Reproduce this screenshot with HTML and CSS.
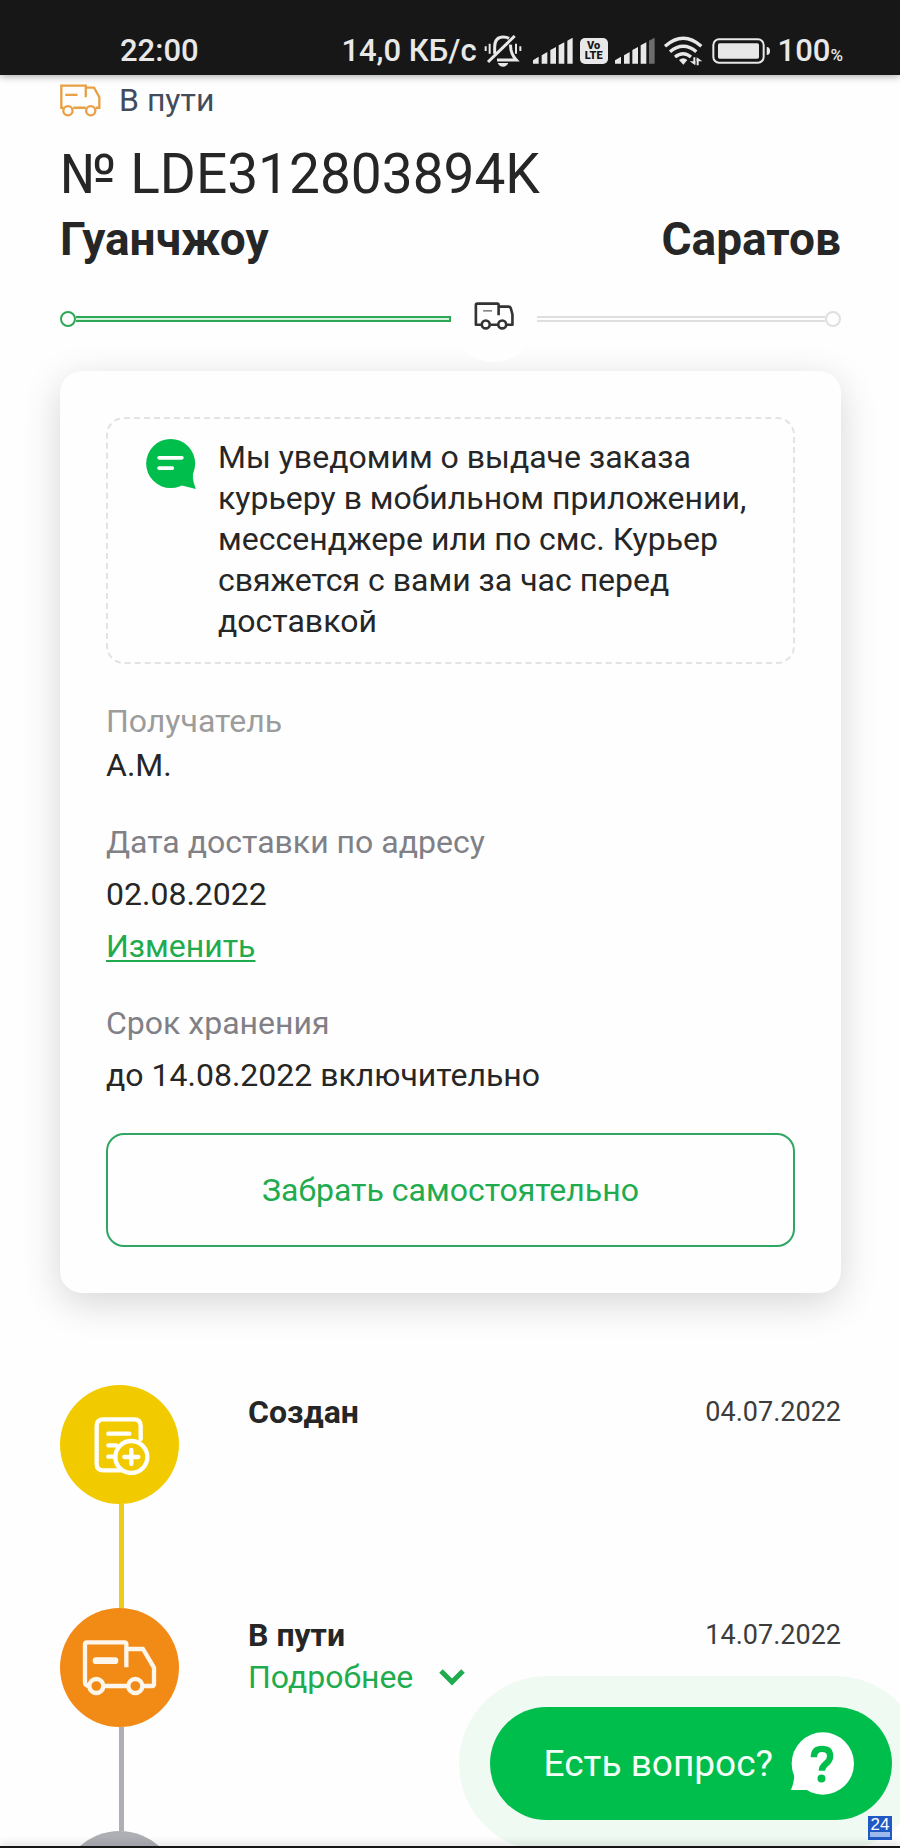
FILE: index.html
```html
<!DOCTYPE html>
<html lang="ru">
<head>
<meta charset="utf-8">
<meta name="viewport" content="width=device-width, initial-scale=1">
<title>Отслеживание заказа</title>
<link rel="stylesheet" href="styles.css">
</head>
<body>
<div class="screen">
  <header class="statusbar">
    <span class="clock">22:00</span>
    <div class="indicators">
      <span>14,0 КБ/с</span>
      <svg width="42" height="32" viewBox="478 104 126 96" fill="none" stroke="#e8e8e8" stroke-width="9" aria-hidden="true">
        <path d="M510 160V140Q510 110 536 110Q546 110 553 114M490 185L570 107M558 133Q556 158 575 179H517"/>
        <path d="M519 188H551Q546 199 535 199Q524 199 519 188Z" fill="#e8e8e8" stroke="none"/>
        <path d="M483 138V152M495 130V160M574 130V160M587 138V152" stroke-width="6"/>
      </svg>
      <svg width="40" height="26" viewBox="626 113 120 78" fill="#e8e8e8" aria-hidden="true">
        <path d="M626 190V180L643 169V190ZM652 190V165L669 155V190ZM678 190V149L695 140V190ZM703 190V135L720 126V190ZM729 190V121L745 112V190Z"/>
      </svg>
      <span class="volte"><span>Vo</span><span>LTE</span></span>
      <svg width="40" height="26" viewBox="36 113 120 78" fill="#e8e8e8" aria-hidden="true">
        <path d="M36 190V180L54 169V190ZM63 190V165L80 155V190ZM88 190V149L105 140V190ZM113 190V135L130 126V190Z"/>
        <path d="M138 190V121L155 112V190Z" fill="#6c6c6c"/>
      </svg>
      <svg width="42" height="30" viewBox="181 107 126 90" fill="none" stroke="#e8e8e8" stroke-width="10" aria-hidden="true">
        <path d="M190 138Q245 90 299 138M205 154Q245 121 284 154M220 170Q245 150 268 170"/>
        <path d="M232 179Q245 169 257 179L245 193Z" fill="#e8e8e8" stroke="none"/>
        <path d="M278 171V190M288 175V195" stroke-width="6"/>
        <path d="M264 183H281V195ZM302 183H285V171Z" fill="#e8e8e8" stroke="none"/>
      </svg>
      <svg width="60" height="26" viewBox="336 111 180 78" fill="none" stroke="#e8e8e8" stroke-width="6" aria-hidden="true">
        <rect x="343" y="115" width="151" height="70" rx="17"/>
        <rect x="357" y="127" width="123" height="46" rx="5" fill="#e8e8e8" stroke="none"/>
        <path d="M503 138Q513 138 513 150Q513 162 503 162Z" fill="#e8e8e8" stroke="none"/>
      </svg>
      <span>100<small class="percent">%</small></span>
    </div>
  </header>

  <main class="page">
    <p class="state">
      <svg width="41" height="33" viewBox="180 254 124 98" fill="none" stroke="#e9a044" stroke-width="7" aria-hidden="true">
        <path d="M190 325H184V258H258V293M258 264H283L299 293V325H288M220 325H258M196 286H233"/>
        <circle cx="204" cy="334" r="14"/><circle cx="273" cy="334" r="14"/>
      </svg>
      В пути
    </p>
    <h1 class="number">№ LDE312803894K</h1>
    <div class="cities"><span>Гуанчжоу</span><span>Саратов</span></div>

    <div class="track">
      <div class="leg leg-done"><span class="dot"></span><span class="rail"></span></div>
      <div class="marker">
        <svg width="40" height="28" viewBox="69 305 120 85" fill="none" stroke="#333" stroke-width="8" stroke-linejoin="round" aria-hidden="true">
          <path d="M90 374H74V314Q74 310 78 310H139Q143 310 143 314V345M145 319H173Q178 319 180 324L185 343V374H168M118 374H140"/>
          <circle cx="104" cy="373" r="12"/><circle cx="154" cy="373" r="12"/>
          <path d="M96 332H123" stroke-width="3"/>
        </svg>
      </div>
      <div class="leg leg-left"><span class="rail"></span><span class="dot"></span></div>
    </div>

    <section class="card">
      <div class="notice">
        <svg class="notice-icon" width="50" height="50" viewBox="438 477 150 151" aria-hidden="true">
          <circle cx="512" cy="551" r="74" fill="#00be4c"/>
          <path d="M582 570Q573 590 588 628L540 616Z" fill="#00be4c"/>
          <path d="M477 534H546M477 565H517" stroke="#fff" stroke-width="11" stroke-linecap="round"/>
        </svg>
        <p class="notice-text">Мы уведомим о выдаче заказа курьеру в мобильном приложении, мессенджере или по смс. Курьер свяжется с вами за час перед доставкой</p>
      </div>
      <div class="field field-tight">
        <span class="label label-light">Получатель</span>
        <span>А.М.</span>
      </div>
      <div class="field">
        <span class="label">Дата доставки по адресу</span>
        <span>02.08.2022</span>
        <a class="link" href="#date">Изменить</a>
      </div>
      <div class="field">
        <span class="label">Срок хранения</span>
        <span>до 14.08.2022 включительно</span>
      </div>
      <button class="pickup" type="button">Забрать самостоятельно</button>
    </section>

    <ol class="timeline">
      <li class="step step-created">
        <div class="badge">
          <svg width="60" height="60" viewBox="149 164 180 180" fill="none" stroke="#fff" stroke-width="13" stroke-linecap="round" aria-hidden="true">
            <path d="M301 236V197Q301 177 281 177H189Q169 177 169 197V310Q169 330 189 330H242"/>
            <path d="M204 220H267M204 255H228M204 289H222M252 290H294M273 269V311"/>
            <circle cx="273" cy="290" r="48"/>
          </svg>
        </div>
        <div class="step-text"><h2 class="step-title">Создан</h2></div>
        <time class="step-date">04.07.2022</time>
      </li>
      <li class="step step-transit">
        <div class="badge">
          <svg width="75" height="57" viewBox="127 177 225 171" fill="none" stroke="#fdf6ec" stroke-width="13" stroke-linejoin="round" aria-hidden="true">
            <path d="M150 318Q136 318 136 306V193Q136 187 142 187H254Q260 187 260 193V262M260 207H310L343 263V312Q343 318 337 318H312M195 318H262"/>
            <circle cx="170" cy="318" r="21"/><circle cx="287" cy="318" r="21"/>
            <path d="M169 242H226" stroke-width="20" stroke-linecap="round"/>
          </svg>
        </div>
        <div class="step-text">
          <h2 class="step-title">В пути</h2>
          <button class="more" type="button">Подробнее
            <svg width="26" height="18" viewBox="0 0 26 18" fill="none" stroke="#21ab4f" stroke-width="5" aria-hidden="true"><path d="M2 3L13 14L24 3"/></svg>
          </button>
        </div>
        <time class="step-date">14.07.2022</time>
      </li>
      <li class="step step-next">
        <div class="badge"></div>
        <div class="step-text"><h2 class="step-title">О</h2></div>
      </li>
    </ol>

    <button class="help" type="button">Есть вопрос?
      <svg width="63" height="63" viewBox="1053 392 190 190" aria-hidden="true">
        <circle cx="1149" cy="487" r="94" fill="#fff"/>
        <path d="M1060 505Q1068 530 1053 567H1105L1120 500Z" fill="#fff"/>
        <path d="M1122 468Q1122 443 1147 443Q1171 443 1171 465Q1171 477 1159 487Q1146 497 1146 509" fill="none" stroke="#00be4c" stroke-width="19"/>
        <circle cx="1145" cy="532" r="12" fill="#00be4c"/>
      </svg>
    </button>
    <div class="corner"><span>24</span></div>
  </main>
  <div class="bottom-edge"></div>
</div>
</body>
</html>
```
FILE: styles.css
```css
* {
  box-sizing: border-box;
}

body,
h1,
h2,
p,
ol {
  margin: 0;
  padding: 0;
}

body {
  background: #fefefe;
  color: #262626;
  font: 32px/40px Roboto, "Noto Sans", sans-serif;
}

svg {
  display: block;
  flex: none;
}

button {
  font: inherit;
  cursor: pointer;
}

.screen {
  display: flex;
  flex-direction: column;
  height: 100vh;
}

/* System status bar */
.statusbar {
  position: relative;
  z-index: 2;
  display: flex;
  align-items: center;
  justify-content: space-between;
  padding: 35px 57px 8px 120px;
  background: #171717;
  box-shadow: 0 2px 7px rgba(0, 0, 0, 0.3);
  color: #e8e8e8;
  font-size: 31px;
  font-weight: 500;
  line-height: 30px;
}

.indicators {
  display: flex;
  align-items: center;
  gap: 7px;
}

.volte {
  display: flex;
  flex-direction: column;
  align-items: center;
  width: 28px;
  padding: 3px 0;
  border-radius: 5px;
  background: #e8e8e8;
  color: #171717;
  font-size: 11px;
  font-weight: 900;
  line-height: 10px;
}

.percent {
  font-size: 17px;
  line-height: 1;
}

/* Page */
.page {
  position: relative;
  flex: 1;
  min-height: 0;
  overflow: hidden;
  padding: 5px 59px 0 60px;
}

.state {
  display: flex;
  align-items: center;
  gap: 18px;
  color: #434c5c;
}

.number {
  margin-top: 22px;
  font-size: 55px;
  font-weight: 400;
  line-height: 64px;
}

.cities {
  display: flex;
  justify-content: space-between;
  margin-top: 5px;
  font-size: 46px;
  font-weight: 700;
  line-height: 56px;
}

.track {
  position: relative;
  z-index: 1;
  display: flex;
  align-items: center;
  margin-top: 9px;
}

.leg {
  display: flex;
  align-items: center;
}

.leg-done {
  flex: 9;
  color: #2fa757;
}

.leg-left {
  flex: 7;
  color: #dfdfdf;
}

.dot {
  width: 16px;
  height: 16px;
  border: 2px solid;
  border-radius: 50%;
}

.rail {
  flex: 1;
  height: 6px;
  border: 2px solid;
  border-width: 2px 0;
}

.leg-done .rail {
  border-right-width: 2px;
  background: #d3f3dd;
}

.marker {
  display: flex;
  align-items: center;
  justify-content: center;
  width: 86px;
  height: 86px;
  padding-bottom: 6px;
  border-radius: 50%;
  background: #fefefe;
}

/* Order card */
.card {
  margin-top: 9px;
  padding: 46px;
  border-radius: 22px;
  background: #fefefe;
  box-shadow: 0 10px 38px rgba(0, 0, 0, 0.16);
}

.notice {
  display: flex;
  gap: 22px;
  padding: 18px 20px 20px 38px;
  border: 2px dashed #e3e3e3;
  border-radius: 18px;
}

.notice-icon {
  margin-top: 2px;
}

.notice-text {
  line-height: 41px;
}

.field {
  display: flex;
  flex-direction: column;
  align-items: flex-start;
  gap: 12px;
  margin-top: 37px;
}

.field-tight {
  gap: 4px;
}

.label {
  color: #808086;
}

.label-light {
  color: #9c9c9c;
}

.link {
  color: #21ab4f;
  text-decoration-thickness: 2px;
  text-underline-offset: 3px;
}

.pickup {
  width: 100%;
  margin-top: 38px;
  padding: 35px 20px;
  border: 2px solid #2fa763;
  border-radius: 18px;
  background: none;
  color: #21ab4f;
}

/* Timeline */
.timeline {
  margin-top: 92px;
  list-style: none;
}

.step {
  display: grid;
  grid-template-columns: 119px 1fr auto;
  column-gap: 69px;
}

.badge {
  display: flex;
  align-items: center;
  justify-content: center;
  height: 119px;
  border-radius: 50%;
}

.step::after {
  content: "";
  width: 5px;
  height: 104px;
  margin-left: 59px;
}

.step-created .badge {
  background: #f1cb00;
}

.step-created::after {
  background: #edcd17;
}

.step-transit .badge {
  background: #f18b15;
}

.step-transit::after,
.step-next .badge {
  background: #aeafb5;
}

.step-text,
.step-date {
  padding-top: 6px;
  line-height: 42px;
}

.step-title {
  font-size: 32px;
  font-weight: 700;
}

.step-date {
  color: #3c3c3c;
  font-size: 27px;
}

.more {
  display: flex;
  align-items: center;
  gap: 26px;
  padding: 0;
  border: 0;
  background: none;
  color: #21ab4f;
}

/* Floating help button */
.help {
  position: absolute;
  right: 8px;
  bottom: 26px;
  z-index: 1;
  display: flex;
  align-items: center;
  gap: 18px;
  padding: 25px 38px 25px 54px;
  border: 0;
  border-radius: 60px;
  background: #00be4c;
  box-shadow: 0 0 0 31px #effaf3;
  color: #f4fff8;
  font-size: 37px;
}

.corner {
  position: absolute;
  right: 8px;
  bottom: 6px;
  z-index: 3;
  width: 24px;
  height: 24px;
  padding: 1px 2px;
  background: #2059c4;
  color: #fff;
  font: 17px/15px "Liberation Sans", sans-serif;
  text-align: center;
}

.corner::after {
  content: "";
  display: block;
  height: 5px;
  background: #9db8ea;
}

.corner span {
  display: block;
}

.bottom-edge {
  position: relative;
  z-index: 2;
  height: 2px;
  background: #151515;
  box-shadow: 0 -2px 7px rgba(0, 0, 0, 0.3);
}
```
